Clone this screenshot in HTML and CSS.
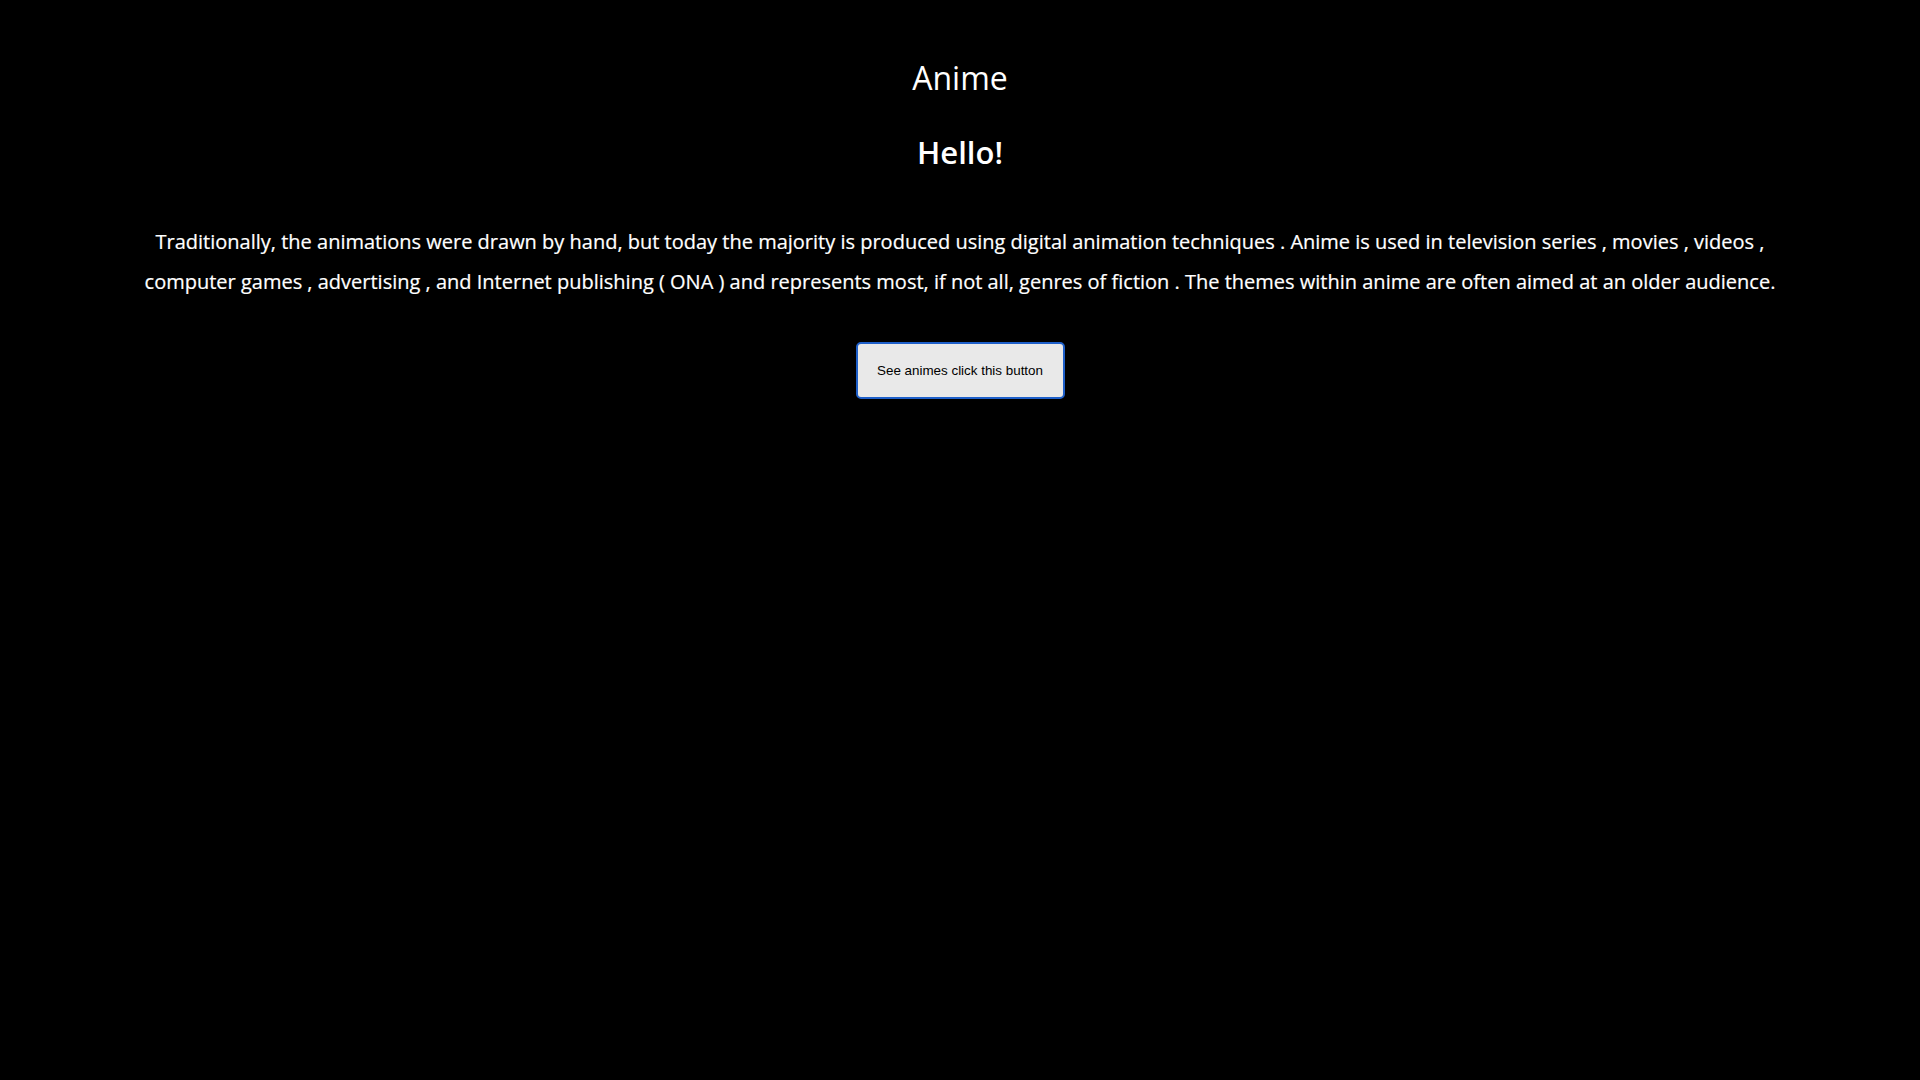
FILE: index.html
```html
<!DOCTYPE html>
<html>
<head>
<meta charset="utf-8">
<title>Anime</title>
<link rel="stylesheet" href="styles.css">
</head>
<body>
<header class="top">
  <div class="site-title">Anime</div>
</header>
<main class="content">
  <h1 class="hello">Hello!</h1>
  <p class="intro">Traditionally, the animations were drawn by hand, but today the majority is produced using digital animation techniques . Anime is used in television series , movies , videos , computer games , advertising , and Internet publishing ( ONA ) and represents most, if not all, genres of fiction . The themes within anime are often aimed at an older audience.</p>
  <div class="actions">
    <button class="btn">See animes click this button</button>
  </div>
</main>
</body>
</html>
```
FILE: styles.css
```css
html, body {
  margin: 0;
  padding: 0;
  background: #000;
  color: #fff;
  font-family: "Open Sans", "DejaVu Sans", sans-serif;
  min-height: 100%;
}
body {
  height: 1080px;
}
.top {
  padding-top: 56px;
  text-align: center;
}
.site-title {
  font-size: 32px;
  line-height: 44px;
}
.content {
  text-align: center;
  padding: 0 140px;
}
.hello {
  margin: 31px 0 0;
  font-size: 31px;
  font-weight: 600;
  line-height: 42px;
}
.intro {
  margin: 49px 0 0;
  font-size: 20px;
  line-height: 40px;
  -webkit-text-stroke: 0.2px #fff;
}
.actions {
  margin-top: 40px;
}
.btn {
  width: 209px;
  height: 57px;
  background: #e9e9e9;
  border: 2px solid #1e5fc9;
  border-radius: 5px;
  color: #000;
  font-family: "Liberation Sans", Arial, sans-serif;
  font-size: 13.4px;
  cursor: pointer;
}
```
